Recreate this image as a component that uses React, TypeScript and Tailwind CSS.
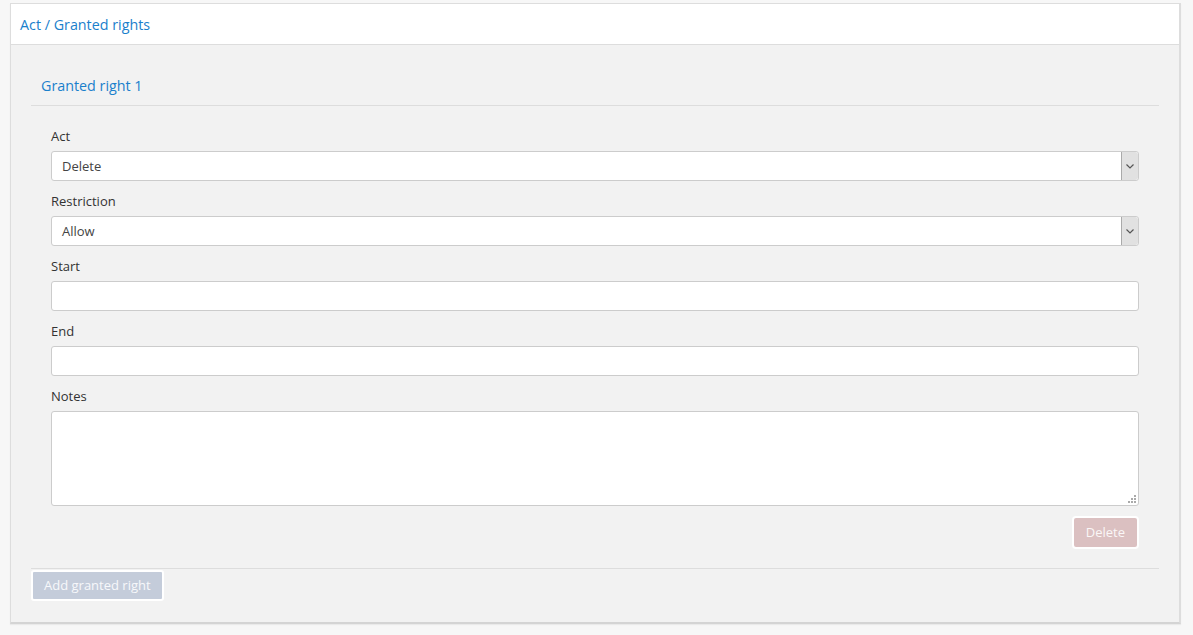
import React from 'react'

const labelCls = 'block h-5 leading-5 mb-[5px] text-[13px] text-[#333]'
const inputCls =
  'block w-full h-[30px] bg-white border border-[#ccc] rounded-[3px] px-[10px] text-[13px] text-[#444] outline-none'

function SelectBox({ value }: { value: string }) {
  return (
    <div className="relative flex h-[30px] w-full bg-white border border-[#ccc] rounded-[3px] mb-[10px]">
      <div className="flex-1 flex items-center pl-[10px] pt-[2px] text-[13px] text-[#444]">{value}</div>
      <div className="w-[17px] flex items-center justify-center bg-[#e1e1e1] border-l border-[#aaa] rounded-r-[3px]">
        <svg width="8" height="5" viewBox="0 0 8 5">
          <path d="M0.5 0.5 L4 4 L7.5 0.5" fill="none" stroke="#555" strokeWidth="1.2" />
        </svg>
      </div>
    </div>
  )
}

export default function App() {
  return (
    <div
      className="min-h-[635px] bg-[#f7f7f7] pt-[3px] pl-[10px] pr-[12px]"
      style={{ fontFamily: '"Open Sans", "Noto Sans", sans-serif' }}
    >
      <div className="bg-[#f2f2f2] border border-[#ddd] border-r-2 border-b-2 border-b-[#d4d4d4] shadow-[0_1px_1px_rgba(0,0,0,0.05)]">
        <div className="h-[41px] bg-white border-b border-[#ddd] flex items-center pl-[9px] pt-[2px] text-[14.3px] text-[#1a80cc]">
          Act / Granted rights
        </div>
        <div className="px-[20px] pt-[20px] pb-[21px]">
          <div className="h-[41px] border-b border-[#ddd] flex items-center pl-[10px] pt-[2px] text-[14.3px] text-[#1a80cc]">
            Granted right 1
          </div>
          <div className="px-[20px] pt-[20px]">
            <label className={labelCls}>Act</label>
            <SelectBox value="Delete" />
            <label className={labelCls}>Restriction</label>
            <SelectBox value="Allow" />
            <label className={labelCls}>Start</label>
            <input className={inputCls + ' mb-[10px]'} />
            <label className={labelCls}>End</label>
            <input className={inputCls + ' mb-[10px]'} />
            <label className={labelCls}>Notes</label>
            <div className="relative">
              <textarea className="block w-full h-[95px] bg-white border border-[#ccc] rounded-[3px] px-[10px] py-[5px] text-[13px] text-[#444] outline-none resize-none" />
              <svg className="absolute right-[3px] bottom-[3px]" width="8" height="8" viewBox="0 0 8 8">
                <rect x="6" y="0" width="2" height="2" fill="#aaa" />
                <rect x="3" y="3" width="2" height="2" fill="#aaa" />
                <rect x="6" y="3" width="2" height="2" fill="#aaa" />
                <rect x="0" y="6" width="2" height="2" fill="#aaa" />
                <rect x="3" y="6" width="2" height="2" fill="#aaa" />
                <rect x="6" y="6" width="2" height="2" fill="#aaa" />
              </svg>
            </div>
            <div className="flex justify-end mt-[10px]">
              <button className="h-[33px] px-[12px] pt-px bg-[#dbc0c1] text-[#faf7f7] text-[13px] rounded-[4px] border-2 border-white">
                Delete
              </button>
            </div>
          </div>
          <div className="mt-[19px] border-t border-[#ddd] pt-px">
            <button className="h-[31px] px-[11px] pt-px bg-[#c4ccda] text-[#f7f8fb] text-[13px] rounded-[3px] border-2 border-white">
              Add granted right
            </button>
          </div>
        </div>
      </div>
    </div>
  )
}
